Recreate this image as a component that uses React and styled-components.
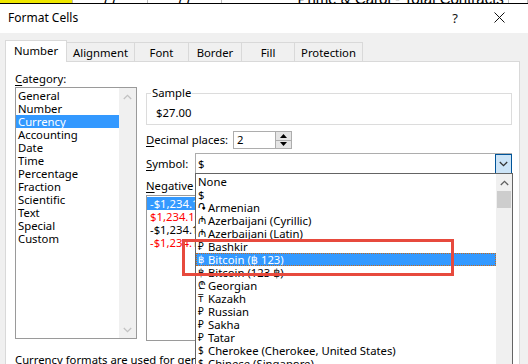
import React from 'react';
import styled, { createGlobalStyle } from 'styled-components';

const GlobalStyle = createGlobalStyle`
  html, body { margin: 0; padding: 0; background: #f0f0f0; overflow: hidden; }
  body { font-family: "Noto Sans", "DejaVu Sans", sans-serif; font-size: 11.3px; color: #000; }
  * { box-sizing: border-box; }
`;

const Window = styled.div`
  position: relative;
  width: 528px;
  height: 364px;
  overflow: hidden;
  display: flex;
  flex-direction: column;
  background: #f0f0f0;
  font-family: "Noto Sans", "DejaVu Sans", sans-serif;
  font-size: 11.3px;
  color: #000;
`;

const Sheet = styled.div`
  display: flex;
  height: 4px;
  flex-shrink: 0;
  border-bottom: 1px solid #000;
  background: #fff;
  overflow: hidden;
`;

const SheetCell = styled.div`
  width: ${p => p.$w}px;
  flex-shrink: 0;
  height: 3px;
  background: ${p => p.$bg || '#fff'};
  border-right: 1px solid #bdbdbd;
  overflow: hidden;
  display: flex;
  align-items: flex-end;
  justify-content: ${p => p.$align || 'center'};
  font-family: "Liberation Sans", Arial, sans-serif;
  font-size: 15px;
  line-height: 15px;
  white-space: nowrap;
  span { margin-bottom: -3px; }
`;

const TitleBar = styled.div`
  height: 29px;
  flex-shrink: 0;
  background: #fff;
  display: flex;
  align-items: center;
  padding: 0 7px 2px 8px;
  font-size: 12px;
`;

const Title = styled.div`
  flex: 1;
`;

const TitleButton = styled.div`
  width: 44px;
  height: 27px;
  display: flex;
  align-items: center;
  justify-content: center;
  font-size: 13px;
  color: #111;
`;

const Body = styled.div`
  flex: 1;
  min-height: 0;
  display: flex;
  flex-direction: column;
  padding: 7px 8px 0 5px;
`;

const TabRow = styled.div`
  display: flex;
  align-items: flex-start;
  height: 22px;
  margin-bottom: -1px;
  position: relative;
  z-index: 1;
`;

const Tab = styled.div`
  width: ${p => p.$w}px;
  height: ${p => (p.$active ? 22 : 19)}px;
  margin-top: ${p => (p.$active ? 0 : 2)}px;
  margin-left: ${p => (p.$first ? 0 : -1)}px;
  border: 1px solid #d9d9d9;
  border-bottom: none;
  background: ${p => (p.$active ? '#fff' : '#f0f0f0')};
  position: relative;
  z-index: ${p => (p.$active ? 2 : 1)};
  display: flex;
  align-items: center;
  justify-content: center;
  padding-bottom: ${p => (p.$active ? 3 : 0)}px;
`;

const Panel = styled.div`
  flex: 1;
  min-height: 0;
  overflow: hidden;
  background: #fff;
  border: 1px solid #d9d9d9;
  border-bottom: none;
  padding: 8px 7px 0 9px;
  display: grid;
  grid-template-columns: 122px 366px;
  column-gap: 9px;
  align-content: start;
`;

const Column = styled.div`
  display: flex;
  flex-direction: column;
  position: relative;
`;

const FieldLabel = styled.div`
  line-height: ${p => p.$lh || 17}px;
  height: ${p => p.$lh || 17}px;
  margin-top: ${p => p.$mt || 0}px;
  white-space: nowrap;
  width: ${p => (p.$w ? `${p.$w}px` : 'auto')};
  flex-shrink: 0;
  u { text-decoration-thickness: 1px; text-underline-offset: 2px; }
`;

const ListBox = styled.div`
  height: ${p => p.$h}px;
  border: 1px solid #9a9a9a;
  display: flex;
  background: #fff;
  overflow: hidden;
  margin-top: ${p => p.$mt || 0}px;
`;

const ListItems = styled.div`
  flex: 1;
  padding: 1px 0;
  display: flex;
  flex-direction: column;
`;

const ListRow = styled.div`
  height: 13px;
  flex-shrink: 0;
  line-height: 13px;
  padding-left: ${p => p.$pl || 2}px;
  white-space: nowrap;
  background: ${p => (p.$selected ? '#3399ff' : 'transparent')};
  color: ${p => (p.$selected ? '#fff' : p.$red ? '#ff0000' : '#000')};
  outline: ${p => (p.$focus ? '1px dotted #c86a1a' : 'none')};
  outline-offset: -1px;
  display: flex;
  align-items: center;
`;

const ScrollBar = styled.div`
  width: ${p => p.$w || 17}px;
  flex-shrink: 0;
  background: #f0f0f0;
  display: flex;
  flex-direction: column;
  justify-content: space-between;
`;

const ScrollArrow = styled.div`
  height: 17px;
  display: flex;
  align-items: center;
  justify-content: center;
  flex-shrink: 0;
`;

const ScrollTrack = styled.div`
  flex: 1;
  display: flex;
  flex-direction: column;
  align-items: stretch;
`;

const ScrollThumb = styled.div`
  height: 17px;
  margin: 0 1px;
  background: #cdcdcd;
`;

const SampleBox = styled.fieldset`
  margin: 16px 0 0 0;
  padding: 0 0 4px 4px;
  border: 1px solid #dcdcdc;
  min-width: 0;
`;

const SampleLegend = styled.legend`
  padding: 0 1px;
  line-height: 14px;
`;

const SampleValue = styled.div`
  padding: 6px 0 0 5px;
  line-height: 14px;
`;

const FormRow = styled.div`
  display: flex;
  align-items: center;
  margin-top: ${p => p.$mt || 0}px;
  position: relative;
  z-index: ${p => p.$z || 0};
`;

const Spin = styled.div`
  width: 59px;
  height: 18px;
  border: 1px solid #adadad;
  display: flex;
  background: #fff;
`;

const SpinValue = styled.div`
  flex: 1;
  padding-left: 3px;
  line-height: 16px;
`;

const SpinButtons = styled.div`
  width: 16px;
  display: flex;
  flex-direction: column;
  border-left: 1px solid #adadad;
`;

const SpinButton = styled.div`
  flex: 1;
  background: #e5e5e5;
  display: flex;
  align-items: center;
  justify-content: center;
  & + & { border-top: 1px solid #adadad; }
`;

const Combo = styled.div`
  position: relative;
  width: 318px;
  height: 22px;
  border: 1px solid #adadad;
  display: flex;
  background: #fff;
`;

const ComboValue = styled.div`
  flex: 1;
  padding-left: 2px;
  line-height: 20px;
`;

const DropButton = styled.div`
  width: 17px;
  margin: 0 -1px 0 0;
  border: 1px solid #005499;
  background: #cce4f7;
  display: flex;
  align-items: center;
  justify-content: center;
`;

const DropList = styled.div`
  position: absolute;
  top: calc(100% - 1px);
  left: -1px;
  width: 318px;
  height: 200px;
  background: #fff;
  border: 1px solid #646464;
  display: flex;
  z-index: 5;
`;

const Sym = styled.span`
  display: inline-block;
  width: 10px;
  flex-shrink: 0;
  font-size: 10px;
  overflow: visible;
`;

const Description = styled.div`
  grid-column: 1 / span 2;
  margin-top: 11px;
  line-height: 15px;
  padding-right: 12px;
`;

const Annotation = styled.div`
  position: absolute;
  left: 182px;
  top: 239px;
  width: 272px;
  height: 37px;
  border: 3px solid #e74a3d;
  z-index: 10;
  pointer-events: none;
`;

const Chevron = ({ up, color = '#606060' }) => (
  <svg width="9" height="6" viewBox="0 0 9 6">
    <path
      d={up ? 'M0.8 5 L4.5 1.3 L8.2 5' : 'M0.8 1 L4.5 4.7 L8.2 1'}
      fill="none"
      stroke={color}
      strokeWidth="1.3"
    />
  </svg>
);

const Triangle = ({ up }) => (
  <svg width="7" height="4" viewBox="0 0 7 4">
    <path d={up ? 'M0 4 L3.5 0 L7 4 Z' : 'M0 0 L3.5 4 L7 0 Z'} fill="#000" />
  </svg>
);

const CloseIcon = () => (
  <svg width="11" height="11" viewBox="0 0 11 11">
    <path d="M0.5 0.5 L10.5 10.5 M10.5 0.5 L0.5 10.5" stroke="#111" strokeWidth="1" />
  </svg>
);

const tabs = [
  { label: 'Number', w: 62, active: true },
  { label: 'Alignment', w: 69 },
  { label: 'Font', w: 55 },
  { label: 'Border', w: 54 },
  { label: 'Fill', w: 54 },
  { label: 'Protection', w: 69 },
];

const categories = [
  'General', 'Number', 'Currency', 'Accounting', 'Date', 'Time', 'Percentage',
  'Fraction', 'Scientific', 'Text', 'Special', 'Custom',
];

const negatives = [
  { t: '-$1,234.10', selected: true },
  { t: '$1,234.10', red: true },
  { t: '-$1,234.10' },
  { t: '-$1,234.10', red: true },
];

const symbols = [
  { s: null, n: 'None' },
  { s: null, n: '$' },
  { s: '֏', n: 'Armenian' },
  { s: '₼', n: 'Azerbaijani (Cyrillic)' },
  { s: '₼', n: 'Azerbaijani (Latin)' },
  { s: '₽', n: 'Bashkir' },
  { s: '฿', n: 'Bitcoin (฿ 123)', selected: true },
  { s: '฿', n: 'Bitcoin (123 ฿)' },
  { s: '₾', n: 'Georgian' },
  { s: '₸', n: 'Kazakh' },
  { s: '₽', n: 'Russian' },
  { s: '₽', n: 'Sakha' },
  { s: '₽', n: 'Tatar' },
  { s: '$', n: 'Cherokee (Cherokee, United States)' },
  { s: '$', n: 'Chinese (Singapore)' },
];

export default function App() {
  return (
    <Window>
      <GlobalStyle />
      <Sheet>
        <SheetCell $w={73} $bg="#f0e800" />
        <SheetCell $w={75}><span>77</span></SheetCell>
        <SheetCell $w={74}><span>77</span></SheetCell>
        <SheetCell $w={287} $align="flex-end"><span>Prime &amp; Carol - Total Contracts&nbsp;</span></SheetCell>
        <SheetCell $w={19} />
      </Sheet>
      <TitleBar>
        <Title>Format Cells</Title>
        <TitleButton>?</TitleButton>
        <TitleButton><CloseIcon /></TitleButton>
      </TitleBar>
      <Body>
        <TabRow>
          {tabs.map((t, i) => (
            <Tab key={t.label} $w={t.w} $active={t.active} $first={i === 0}>{t.label}</Tab>
          ))}
        </TabRow>
        <Panel>
          <Column>
            <FieldLabel><u>C</u>ategory:</FieldLabel>
            <ListBox $h={252}>
              <ListItems>
                {categories.map(c => (
                  <ListRow key={c} $selected={c === 'Currency'}>{c}</ListRow>
                ))}
              </ListItems>
              <ScrollBar>
                <ScrollArrow><Chevron up color="#c2c2c2" /></ScrollArrow>
                <ScrollArrow><Chevron color="#c2c2c2" /></ScrollArrow>
              </ScrollBar>
            </ListBox>
          </Column>
          <Column>
            <SampleBox>
              <SampleLegend>Sample</SampleLegend>
              <SampleValue>$27.00</SampleValue>
            </SampleBox>
            <FormRow $mt={6}>
              <FieldLabel $w={87} $lh={18}><u>D</u>ecimal places:</FieldLabel>
              <Spin>
                <SpinValue>2</SpinValue>
                <SpinButtons>
                  <SpinButton><Triangle up /></SpinButton>
                  <SpinButton><Triangle /></SpinButton>
                </SpinButtons>
              </Spin>
            </FormRow>
            <FormRow $mt={4} $z={5}>
              <FieldLabel $w={49} $lh={22}><u>S</u>ymbol:</FieldLabel>
              <Combo>
                <ComboValue>$</ComboValue>
                <DropButton><Chevron color="#333" /></DropButton>
                <DropList>
                  <ListItems>
                    {symbols.map(it => (
                      <ListRow key={it.n} $selected={it.selected} $focus={it.selected} $pl={2}>
                        {it.s && <Sym>{it.s}</Sym>}
                        {it.n}
                      </ListRow>
                    ))}
                  </ListItems>
                  <ScrollBar $w={16}>
                    <ScrollTrack>
                      <ScrollArrow><Chevron up color="#606060" /></ScrollArrow>
                      <ScrollThumb />
                    </ScrollTrack>
                  </ScrollBar>
                </DropList>
              </Combo>
            </FormRow>
            <FieldLabel $lh={15} $mt={3}><u>N</u>egative numbers:</FieldLabel>
            <ListBox $h={146} $mt={2}>
              <ListItems>
                {negatives.map((n, i) => (
                  <ListRow key={i} $selected={n.selected} $red={n.red} $pl={3}>{n.t}</ListRow>
                ))}
              </ListItems>
            </ListBox>
          </Column>
          <Description>
            Currency formats are used for general monetary values. Use Accounting formats to align decimal points in a column.
          </Description>
        </Panel>
      </Body>
      <Annotation />
    </Window>
  );
}
